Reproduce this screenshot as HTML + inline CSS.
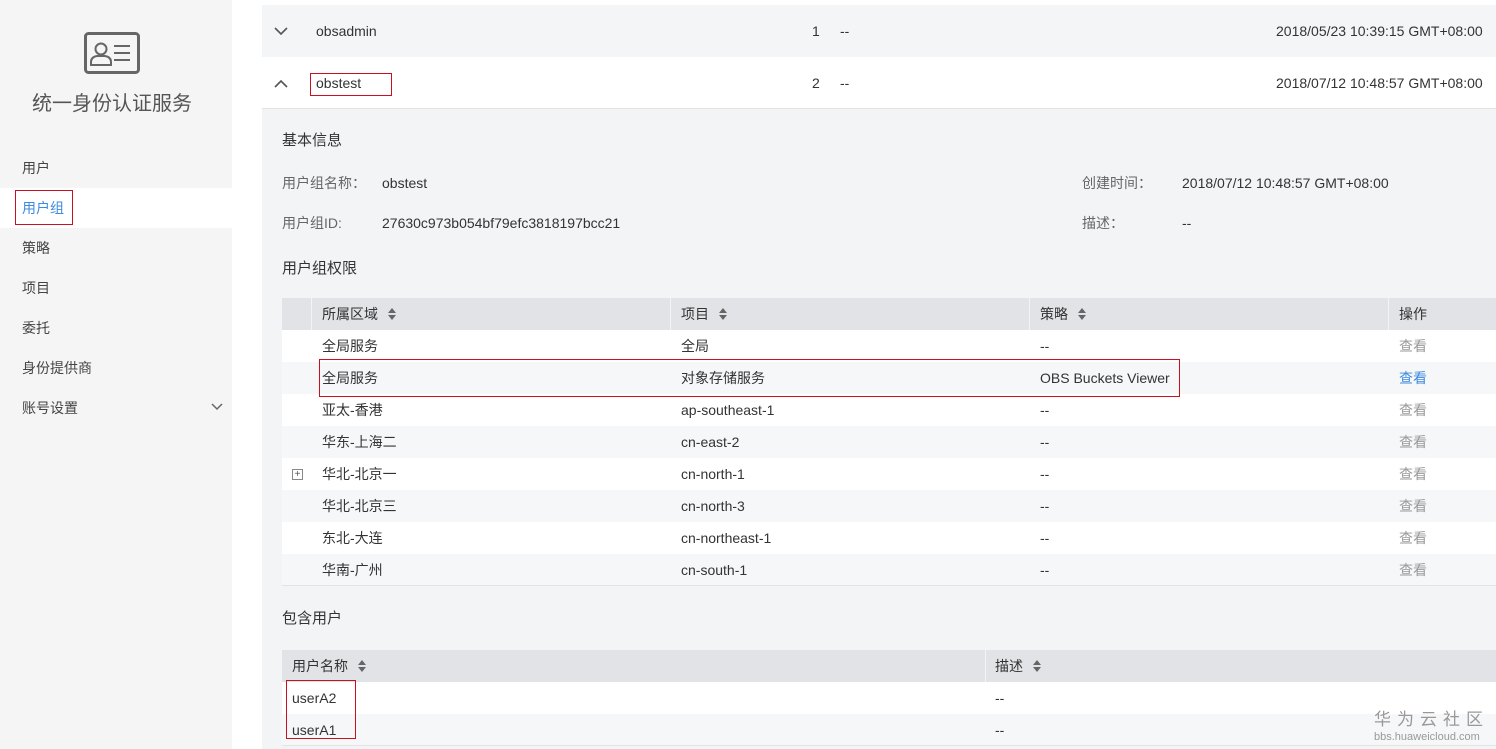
<!DOCTYPE html>
<html><head><meta charset="utf-8"><style>
*{margin:0;padding:0;box-sizing:border-box}
body{width:1496px;height:749px;overflow:hidden;background:#fff;font-family:"Liberation Sans","Noto Sans CJK SC",sans-serif;font-size:14px;color:#333;position:relative;line-height:16px}
.a{position:absolute;white-space:nowrap}
.side{position:absolute;left:0;top:0;width:232px;height:749px;background:#f5f5f5}
.nav{position:absolute;left:22px;font-size:14px;color:#444}
.box{position:absolute;border:1px solid #c8101e}
.row{position:absolute;left:282px;width:1214px;height:32px}
.cell{position:absolute;top:8px;font-size:14px;color:#333;white-space:nowrap;line-height:16px}
.sort{display:inline-block;margin-left:10px;vertical-align:-1px}
.gray{color:#999}
</style></head><body>
<div class="side"></div>
<div class="a" style="left:0;top:188px;width:232px;height:40px;background:#fff"></div>
<svg class="a" style="left:84px;top:32px" width="56" height="42" viewBox="0 0 56 42"><rect x="1.5" y="1.5" width="53" height="39" rx="3" fill="none" stroke="#666" stroke-width="3"/><circle cx="17" cy="17" r="5.5" fill="none" stroke="#666" stroke-width="2"/><path d="M7 33 v-3 q0-5 6-6 h8 q6 1 6 6 v3 z" fill="none" stroke="#666" stroke-width="2"/><path d="M30 14h16M30 21h16M30 28h16" stroke="#666" stroke-width="2"/></svg>
<div class="a" style="left:32px;top:92px;font-size:20px;line-height:24px;color:#555">统一身份认证服务</div>
<div class="nav" style="top:160px">用户</div>
<div class="nav" style="top:200px;color:#3c8be0">用户组</div>
<div class="box" style="left:15px;top:190px;width:58px;height:35px"></div>
<div class="nav" style="top:240px">策略</div>
<div class="nav" style="top:280px">项目</div>
<div class="nav" style="top:320px">委托</div>
<div class="nav" style="top:360px">身份提供商</div>
<div class="nav" style="top:400px">账号设置</div>
<svg class="a" style="left:211px;top:403px" width="12" height="8"><path d="M1 1l5 5 5-5" fill="none" stroke="#666" stroke-width="1.5"/></svg>

<div class="a" style="left:262px;top:5px;width:1234px;height:52px;background:#f4f5f7"></div>
<svg class="a" style="left:274px;top:27px" width="14" height="9"><path d="M1 1l6 6 6-6" fill="none" stroke="#555" stroke-width="1.6"/></svg>
<div class="a" style="left:316px;top:23px">obsadmin</div>
<div class="a" style="left:812px;top:23px">1</div><div class="a" style="left:840px;top:23px">--</div>
<div class="a" style="left:1276px;top:23px">2018/05/23 10:39:15 GMT+08:00</div>
<svg class="a" style="left:274px;top:79px" width="14" height="9"><path d="M1 8l6-6 6 6" fill="none" stroke="#555" stroke-width="1.6"/></svg>
<div class="a" style="left:316px;top:75px">obstest</div>
<div class="box" style="left:310px;top:73px;width:82px;height:23px"></div>
<div class="a" style="left:812px;top:75px">2</div><div class="a" style="left:840px;top:75px">--</div>
<div class="a" style="left:1276px;top:75px">2018/07/12 10:48:57 GMT+08:00</div>
<div class="a" style="left:262px;top:108px;width:1234px;height:1px;background:#e3e3e3"></div>

<div class="a" style="left:262px;top:109px;width:1234px;height:640px;background:#f3f4f6"></div>
<div class="a" style="left:282px;top:133px;font-size:15px">基本信息</div>
<div class="a" style="left:282px;top:175px;color:#666">用户组名称：</div><div class="a" style="left:382px;top:175px">obstest</div>
<div class="a" style="left:1082px;top:175px;color:#666">创建时间：</div><div class="a" style="left:1182px;top:175px">2018/07/12 10:48:57 GMT+08:00</div>
<div class="a" style="left:282px;top:215px;color:#666">用户组ID:</div><div class="a" style="left:382px;top:215px">27630c973b054bf79efc3818197bcc21</div>
<div class="a" style="left:1082px;top:215px;color:#666">描述：</div><div class="a" style="left:1182px;top:215px">--</div>
<div class="a" style="left:282px;top:261px;font-size:15px">用户组权限</div>

<div class="row" style="top:298px;background:#e1e3e6">
<div class="a" style="left:29px;top:0;width:1px;height:32px;background:#f3f4f6"></div>
<div class="a" style="left:388px;top:0;width:1px;height:32px;background:#f3f4f6"></div>
<div class="a" style="left:747px;top:0;width:1px;height:32px;background:#f3f4f6"></div>
<div class="a" style="left:1106px;top:0;width:1px;height:32px;background:#f3f4f6"></div>
<div class="cell" style="left:40px">所属区域<svg class="sort" width="8" height="12"><path d="M4 0L8 5H0z M4 12L8 7H0z" fill="#666"/></svg></div>
<div class="cell" style="left:399px">项目<svg class="sort" width="8" height="12"><path d="M4 0L8 5H0z M4 12L8 7H0z" fill="#666"/></svg></div>
<div class="cell" style="left:758px">策略<svg class="sort" width="8" height="12"><path d="M4 0L8 5H0z M4 12L8 7H0z" fill="#666"/></svg></div>
<div class="cell" style="left:1117px">操作</div></div>
<div class="row" style="top:330px;background:#fff"><div class="cell" style="left:40px">全局服务</div><div class="cell" style="left:399px">全局</div><div class="cell" style="left:758px">--</div><div class="cell gray" style="left:1117px">查看</div></div>
<div class="row" style="top:362px;background:#f6f7f8"><div class="cell" style="left:40px">全局服务</div><div class="cell" style="left:399px">对象存储服务</div><div class="cell" style="left:758px">OBS Buckets Viewer</div><div class="cell" style="left:1117px;color:#3c8be0">查看</div></div>
<div class="row" style="top:394px;background:#fff"><div class="cell" style="left:40px">亚太-香港</div><div class="cell" style="left:399px">ap-southeast-1</div><div class="cell" style="left:758px">--</div><div class="cell gray" style="left:1117px">查看</div></div>
<div class="row" style="top:426px;background:#f6f7f8"><div class="cell" style="left:40px">华东-上海二</div><div class="cell" style="left:399px">cn-east-2</div><div class="cell" style="left:758px">--</div><div class="cell gray" style="left:1117px">查看</div></div>
<div class="row" style="top:458px;background:#fff"><div class="a" style="left:10px;top:11px;width:11px;height:11px;border:1px solid #888;font-size:10px;line-height:9px;text-align:center;color:#555">+</div><div class="cell" style="left:40px">华北-北京一</div><div class="cell" style="left:399px">cn-north-1</div><div class="cell" style="left:758px">--</div><div class="cell gray" style="left:1117px">查看</div></div>
<div class="row" style="top:490px;background:#f6f7f8"><div class="cell" style="left:40px">华北-北京三</div><div class="cell" style="left:399px">cn-north-3</div><div class="cell" style="left:758px">--</div><div class="cell gray" style="left:1117px">查看</div></div>
<div class="row" style="top:522px;background:#fff"><div class="cell" style="left:40px">东北-大连</div><div class="cell" style="left:399px">cn-northeast-1</div><div class="cell" style="left:758px">--</div><div class="cell gray" style="left:1117px">查看</div></div>
<div class="row" style="top:554px;background:#f6f7f8;border-bottom:1px solid #e3e3e3"><div class="cell" style="left:40px">华南-广州</div><div class="cell" style="left:399px">cn-south-1</div><div class="cell" style="left:758px">--</div><div class="cell gray" style="left:1117px">查看</div></div>
<div class="box" style="left:319px;top:359px;width:861px;height:38px"></div>

<div class="a" style="left:282px;top:611px;font-size:15px">包含用户</div>
<div class="row" style="top:650px;background:#e1e3e6"><div class="a" style="left:703px;top:0;width:1px;height:32px;background:#f3f4f6"></div><div class="cell" style="left:10px">用户名称<svg class="sort" width="8" height="12"><path d="M4 0L8 5H0z M4 12L8 7H0z" fill="#666"/></svg></div><div class="cell" style="left:713px">描述<svg class="sort" width="8" height="12"><path d="M4 0L8 5H0z M4 12L8 7H0z" fill="#666"/></svg></div></div>
<div class="row" style="top:682px;background:#fff"><div class="cell" style="left:10px">userA2</div><div class="cell" style="left:713px">--</div></div>
<div class="row" style="top:714px;background:#f6f7f8;border-bottom:1px solid #e3e3e3"><div class="cell" style="left:10px">userA1</div><div class="cell" style="left:713px">--</div></div>
<div class="box" style="left:286px;top:680px;width:70px;height:59px"></div>
<div class="a" style="left:1374px;top:710px;font-size:17px;line-height:20px;color:#999;letter-spacing:6px">华为云社区</div>
<div class="a" style="left:1374px;top:731px;font-size:11px;line-height:12px;color:#999">bbs.huaweicloud.com</div>
</body></html>
